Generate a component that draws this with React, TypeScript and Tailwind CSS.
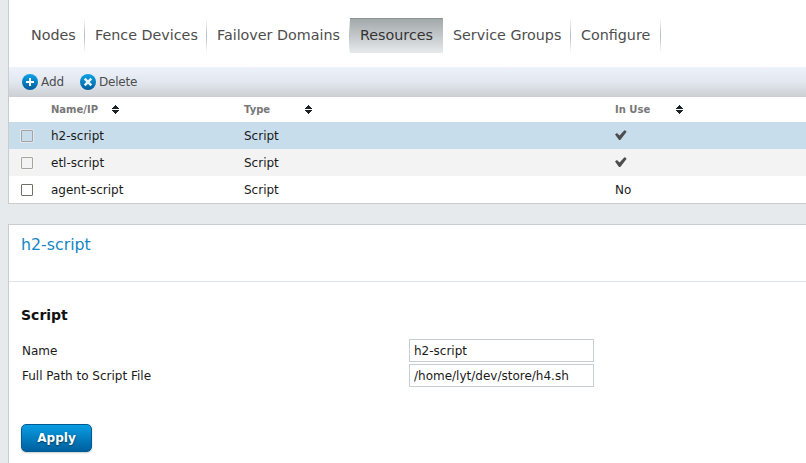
import React from "react";

const tabs = [
  { label: "Nodes", width: "w-[64px]" },
  { label: "Fence Devices", width: "w-[122px]" },
  { label: "Failover Domains", width: "w-[143px]" },
  { label: "Resources", width: "w-[93px]", active: true },
  { label: "Service Groups", width: "w-[128px]" },
  { label: "Configure", width: "w-[90px]" },
];

const rows = [
  { name: "h2-script", type: "Script", used: true, bg: "bg-[#c8ddeb]" },
  { name: "etl-script", type: "Script", used: true, bg: "bg-[#f3f3f3]" },
  { name: "agent-script", type: "Script", used: false, bg: "bg-white" },
];

function SortIcon() {
  return (
    <svg width="7" height="9" viewBox="0 0 7 9" fill="#1b2327" shapeRendering="crispEdges">
      <path d="M3 0h1v1h1v1h1v1h1v1H0V3h1V2h1V1h1zM0 5h7v1H6v1H5v1H4v1H3V8H2V7H1V6H0z" />
    </svg>
  );
}

function CircleIcon({ kind }: { kind: "add" | "delete" }) {
  return (
    <svg width="16" height="16" viewBox="0 0 16 16">
      <defs>
        <linearGradient id={kind} x1="0" y1="0" x2="0" y2="1">
          <stop offset="0" stopColor="#0da3e8" />
          <stop offset="1" stopColor="#005c9c" />
        </linearGradient>
      </defs>
      <circle cx="8" cy="8" r="8" fill={`url(#${kind})`} />
      {kind === "add" ? (
        <path d="M8 4v8M4 8h8" stroke="#fff" strokeWidth="2" />
      ) : (
        <path d="M4.7 4.7l6.6 6.6M11.3 4.7l-6.6 6.6" stroke="#e8f2fa" strokeWidth="2.5" />
      )}
    </svg>
  );
}

function CheckIcon() {
  return (
    <svg width="12" height="11" viewBox="0 0 12 11">
      <path d="M0 4.6L1.9 3L4.6 5.4L9.4 0.2L11.3 1V2.2L5.3 10H4z" fill="#4d4d4d" />
    </svg>
  );
}

function HeaderCell({ label, cell, gap }: { label: string; cell: string; gap: string }) {
  return (
    <div className={`flex items-center ${cell}`}>
      <span className={`whitespace-nowrap ${gap}`}>{label}</span>
      <SortIcon />
    </div>
  );
}

export default function App() {
  return (
    <div className="h-[463px] w-[806px] overflow-hidden bg-[#e6eaed] pl-2 font-['DejaVu_Sans',sans-serif] text-xs text-[#1a1a1a]">
      <section className="h-[204px] border-b border-l border-[#c8cdd1] bg-white">
        <nav className="flex h-[67px] pt-[18px] pl-3 text-[14.3px] text-[#4d4d4d]">
          {tabs.map((tab) => (
            <div
              key={tab.label}
              className={`flex h-[35px] shrink-0 justify-between whitespace-nowrap pl-[10px] ${tab.width} ${
                tab.active
                  ? "border-t border-[#8d9295] bg-linear-to-b from-[#a3a8ab] to-[#e6eaed] leading-[32px] text-[#333]"
                  : "leading-[34px]"
              }`}
            >
              <span>{tab.label}</span>
              {!tab.active && (
                <span className="w-px bg-linear-to-b from-white via-[#b4bbc0] to-white" />
              )}
            </div>
          ))}
        </nav>
        <div className="flex h-[30px] items-center border-b border-[#cbcfd3] bg-linear-to-b from-[#edf2fb] via-[#e3e8f0] to-[#cdd1d5] pl-[13px] text-[#4d4d4d]">
          <CircleIcon kind="add" />
          <span className="mr-[3px] ml-[3px] w-[36px]">Add</span>
          <CircleIcon kind="delete" />
          <span className="ml-[3px] tracking-[-0.2px]">Delete</span>
        </div>
        <div className="flex h-[25px] pl-[42px] text-[10px] font-bold text-[#777]">
          <HeaderCell label="Name/IP" cell="w-[193px]" gap="w-[61px]" />
          <HeaderCell label="Type" cell="w-[371px]" gap="w-[61px]" />
          <HeaderCell label="In Use" cell="w-[150px]" gap="w-[61px]" />
        </div>
        {rows.map((row) => (
          <div key={row.name} className={`flex h-[27px] items-center pl-3 ${row.bg}`}>
            <span
              className={`mr-[18px] size-3 rounded-[1px] border ${
                row.used
                  ? "border-[#a6a39f] shadow-[0_0_0_1px_rgba(255,255,255,0.4)]"
                  : "border-[#716d67] bg-white"
              }`}
            />
            <span className="w-[193px]">{row.name}</span>
            <span className="w-[371px]">{row.type}</span>
            {row.used ? <CheckIcon /> : <span>No</span>}
          </div>
        ))}
      </section>

      <section className="mt-5 h-[239px] border-t border-l border-[#c8cdd1] bg-white">
        <h1 className="h-[57px] border-b border-[#dde3e7] pt-2 pl-3 text-[15.8px] leading-6 text-[#1486c4]">
          h2-script
        </h1>
        <div className="pt-[23px] pl-3">
          <h2 className="h-[34px] text-sm leading-5 font-bold text-[#111]">Script</h2>
          <label className="mb-0.5 flex h-[23px] items-center pl-px">
            <span className="w-[387px]">Name</span>
            <input className="h-[23px] w-[185px] border border-[#c8cdd1] px-1 outline-none" defaultValue="h2-script" />
          </label>
          <label className="flex h-[23px] items-center pl-px">
            <span className="w-[387px]">Full Path to Script File</span>
            <input className="h-[23px] w-[185px] border border-[#c8cdd1] px-1 outline-none" defaultValue="/home/lyt/dev/store/h4.sh" />
          </label>
          <button className="mt-[37px] h-7 w-[71px] rounded-[5px] border border-[#005a92] bg-linear-to-b from-[#0b9de3] to-[#00609f] font-bold text-white shadow-[0_1px_2px_rgba(0,0,0,0.2)] text-shadow-[0_1px_2px_rgba(0,0,0,0.5)]">
            Apply
          </button>
        </div>
      </section>
    </div>
  );
}
